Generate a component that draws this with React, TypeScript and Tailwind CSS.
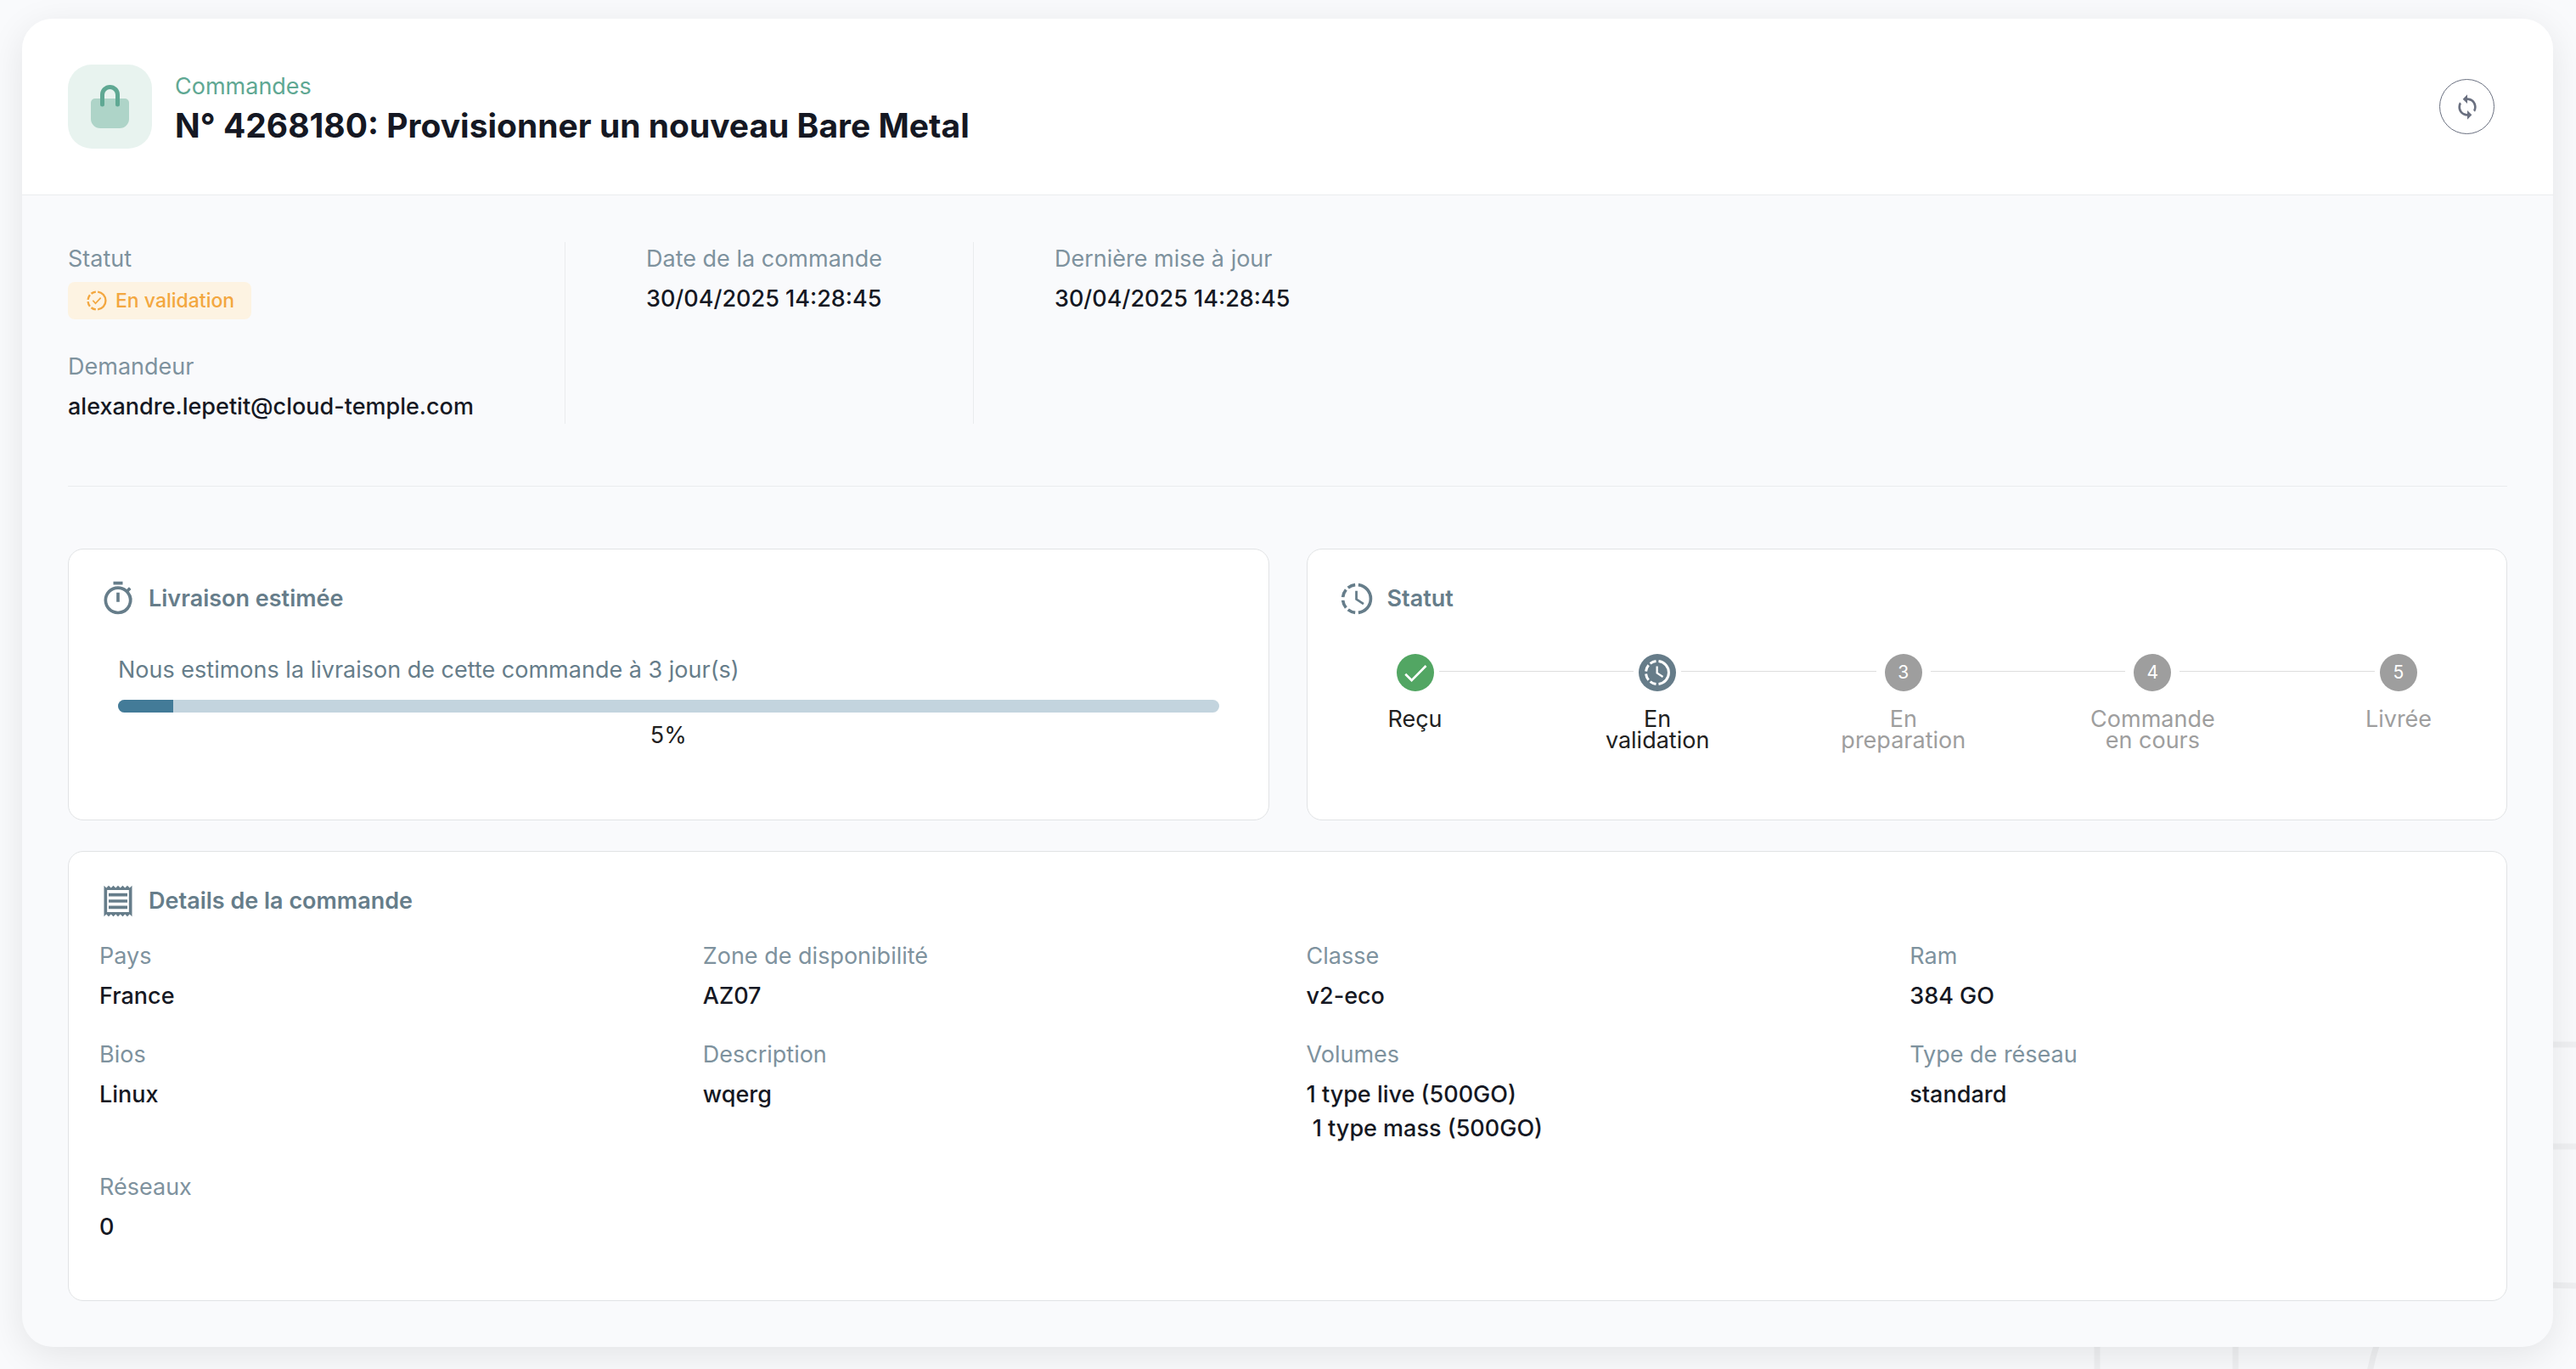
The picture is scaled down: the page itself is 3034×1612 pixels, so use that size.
import { Fragment, type ReactNode } from "react";
import { MdOutlineReceipt, MdOutlineTimer, MdSync } from "react-icons/md";

const summary = [
  { label: "Date de la commande", value: "30/04/2025 14:28:45" },
  { label: "Dernière mise à jour", value: "30/04/2025 14:28:45" },
];

const details = [
  { label: "Pays", value: "France" },
  { label: "Zone de disponibilité", value: "AZ07" },
  { label: "Classe", value: "v2-eco" },
  { label: "Ram", value: "384 GO" },
  { label: "Bios", value: "Linux" },
  { label: "Description", value: "wqerg" },
  { label: "Volumes", value: "1 type live (500GO)\n 1 type mass (500GO)" },
  { label: "Type de réseau", value: "standard" },
  { label: "Réseaux", value: "0" },
];

function ProgressRing({ className, children }: { className: string; children: ReactNode }) {
  return (
    <svg viewBox="0 0 24 24" fill="none" stroke="currentColor" className={className} aria-hidden="true">
      <path
        strokeWidth="2"
        d="M13 3.06a9 9 0 0 1 0 17.88M11 3.06a9 9 0 0 0-4.6 1.9M5.1 6.200a9 9 0 0 0-2.04 4.8M3.060 13a9 9 0 0 0 2.04 4.8M6.400 19.040a9 9 0 0 0 4.600 1.900"
      />
      {children}
    </svg>
  );
}

function ClockRing({ className }: { className: string }) {
  return (
    <ProgressRing className={className}>
      <path strokeWidth="1.5" d="M11.75 7v5.300l4.600 3" />
    </ProgressRing>
  );
}

function Field({ label, children }: { label: string; children: ReactNode }) {
  return (
    <div className="flex flex-col items-start gap-[7px]">
      <dt className="text-[#7e929e]">{label}</dt>
      <dd className="whitespace-pre font-medium text-[#151823]">{children}</dd>
    </div>
  );
}

function Panel({ icon, title, className, children }: { icon: ReactNode; title: string; className: string; children: ReactNode }) {
  return (
    <section className={`rounded-[18px] border border-[#e1e3e5] bg-white px-9 pt-9 ${className}`}>
      <h2 className="flex items-center gap-3.5 font-semibold text-[#667d8a]">
        {icon}
        {title}
      </h2>
      {children}
    </section>
  );
}

const steps = [
  {
    label: "Reçu",
    size: "w-14",
    tone: "text-[#212121]",
    disc: "bg-[#52a663]",
    mark: (
      <svg viewBox="0 0 24 24" fill="none" stroke="currentColor" strokeWidth="2" className="size-8" aria-hidden="true">
        <path d="M3.200 13.300l5.500 5.500L21.400 6" />
      </svg>
    ),
  },
  { label: "En\nvalidation", size: "w-14", tone: "text-[#212121]", disc: "bg-[#667c89]", mark: <ClockRing className="size-9" /> },
  { label: "En\npreparation", size: "w-16", tone: "text-[#9e9e9e]", disc: "bg-[#9e9e9e]", mark: "3" },
  { label: "Commande\nen cours", size: "w-16", tone: "text-[#9e9e9e]", disc: "bg-[#9e9e9e]", mark: "4" },
  { label: "Livrée", size: "w-14", tone: "text-[#9e9e9e]", disc: "bg-[#9e9e9e]", mark: "5" },
];

function Stepper() {
  return (
    <ol className="mx-[63px] mt-[43px] flex items-start">
      {steps.map((step, i) => (
        <Fragment key={step.label}>
          {i > 0 && <li role="presentation" className="mt-5 h-px flex-1 bg-[#dedede]" />}
          <li className={`flex flex-col items-center gap-5 ${step.size}`}>
            <span className={`grid size-11 place-items-center rounded-full text-[21px] text-white ${step.disc}`}>{step.mark}</span>
            <span className={`whitespace-pre text-center leading-[25px] ${step.tone}`}>{step.label}</span>
          </li>
        </Fragment>
      ))}
    </ol>
  );
}

export default function App() {
  const progress = 5;
  return (
    <div className="relative isolate min-h-screen overflow-hidden bg-[#f9fafc] pt-[22px] pr-[27px] pb-[26px] pl-[26px] font-['Inter','Noto_Sans',sans-serif] text-[27px] leading-10">
      <svg
        viewBox="0 0 600 400"
        fill="none"
        stroke="#eff0f2"
        strokeWidth="7"
        className="absolute right-0 bottom-0 -z-10 w-[600px]"
        aria-hidden="true"
      >
        <path d="M560 18h40M560 138h40M560 301l40 1M36 360v40M199 360v40M370 360q-8 18 -13 44" />
      </svg>

      <main className="rounded-[36px] bg-[#f9fafc] shadow-[0_10px_44px_rgba(0,0,0,0.09)]">
        <header className="flex items-start gap-[27px] rounded-t-[36px] border-b border-[#eaecee] bg-white py-[54px] pr-[69px] pl-[54px]">
          <span className="size-[99px] shrink-0 rounded-[28px] bg-[#e8f3ef]">
            <svg viewBox="0 0 99 99" fill="none" aria-hidden="true">
              <path
                fill="#aed4c8"
                d="M32 40h35a5 5 0 0 1 5 5v19a11 11 0 0 1-11 11H38a11 11 0 0 1-11-11V45a5 5 0 0 1 5-5z"
              />
              <path stroke="#5fa893" strokeWidth="5" strokeLinecap="round" d="M40.5 47V35.500a9 9 0 0 1 18 0V47" />
            </svg>
          </span>
          <div className="flex-1 pt-1.5">
            <p className="text-[#5fa893]">Commandes</p>
            <h1 className="text-[39px] leading-[52px] font-bold text-[#151823]">N° 4268180: Provisionner un nouveau Bare Metal</h1>
          </div>
          <button
            type="button"
            aria-label="Actualiser"
            className="grid size-[65px] place-items-center self-center rounded-full border border-[#6a7080] text-[#6a7080]"
          >
            <MdSync className="size-8" />
          </button>
        </header>

        <div className="px-[54px] pt-[55px] pb-[54px]">
          <dl className="flex">
            <div className="flex w-[586px] flex-col gap-9 border-r border-[#eaecee]">
              <Field label="Statut">
                <span className="flex h-11 items-center gap-2 rounded-lg bg-[#fdf3e2] px-5 text-[23px] text-[#f3a73f]">
                  <ProgressRing className="size-7">
                    <path strokeWidth="1.5" d="M8 11.800l2.700 3 5.300-5.700" />
                  </ProgressRing>
                  En validation
                </span>
              </Field>
              <Field label="Demandeur">alexandre.lepetit@cloud-temple.com</Field>
            </div>
            {summary.map((item, i) => (
              <div key={item.label} className={i === 0 ? "w-[481px] border-r border-[#eaecee] pl-[95px]" : "pl-[95px]"}>
                <Field label={item.label}>{item.value}</Field>
              </div>
            ))}
          </dl>

          <hr className="my-[73px] border-[#eaecee]" />

          <div className="grid grid-cols-2 gap-x-11 gap-y-9">
            <Panel icon={<MdOutlineTimer className="size-11" />} title="Livraison estimée" className="pb-[79px]">
              <div className="mx-[22px] mt-[42px]">
                <p className="text-[#667d8a]" id="delivery">
                  Nous estimons la livraison de cette commande à 3 jour(s)
                </p>
                <div
                  role="progressbar"
                  aria-labelledby="delivery"
                  aria-valuenow={progress}
                  className="mt-[15px] h-[15px] overflow-hidden rounded-lg bg-[#c3d4de]"
                >
                  <div className="h-full bg-[#437b98]" style={{ width: `${progress}%` }} />
                </div>
                <p className="mt-[7px] text-center text-[#212121]">{progress}%</p>
              </div>
            </Panel>

            <Panel icon={<ClockRing className="size-11" />} title="Statut" className="pb-[79px]">
              <Stepper />
            </Panel>

            <Panel icon={<MdOutlineReceipt className="size-11" />} title="Details de la commande" className="col-span-2 pb-[66px]">
              <dl className="mt-[23px] grid grid-cols-4 gap-x-11 gap-y-[29px]">
                {details.map((item) => (
                  <Field key={item.label} label={item.label}>
                    {item.value}
                  </Field>
                ))}
              </dl>
            </Panel>
          </div>
        </div>
      </main>
    </div>
  );
}
